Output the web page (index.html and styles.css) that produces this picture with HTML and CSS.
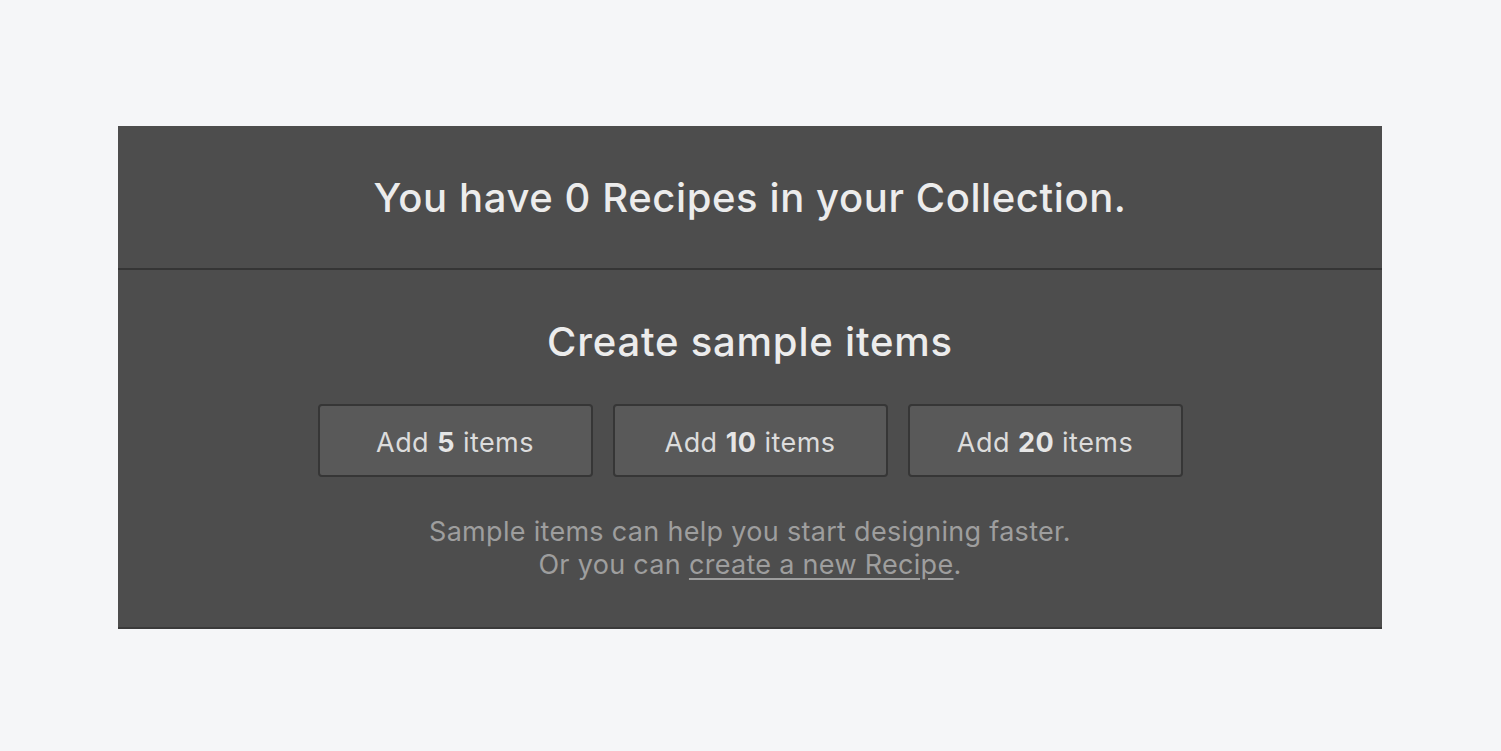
FILE: index.html
```html
<!DOCTYPE html>
<html lang="en">
<head>
<meta charset="utf-8">
<title>Collection</title>
<link rel="stylesheet" href="styles.css">
</head>
<body>
<div class="page">
  <section class="panel">
    <header class="panel-head">
      <h1 class="title">You have 0 Recipes in your Collection.</h1>
    </header>
    <div class="panel-body">
      <h2 class="subtitle">Create sample items</h2>
      <div class="buttons">
        <button class="btn">Add <b>5</b> items</button>
        <button class="btn">Add <b>10</b> items</button>
        <button class="btn">Add <b>20</b> items</button>
      </div>
      <p class="note">Sample items can help you start designing faster.<br>Or you can <a href="#" class="link">create a new Recipe</a>.</p>
    </div>
  </section>
</div>
</body>
</html>
```

FILE: styles.css
```css
html, body {
  margin: 0;
  padding: 0;
  background: #f5f6f8;
  font-family: Inter, "Noto Sans", sans-serif;
}
.page {
  padding: 126px 119px 0 118px;
}
.panel {
  background: #4d4d4d;
  border-bottom: 2px solid #3a3a3a;
  box-sizing: border-box;
}
.panel-head {
  height: 142px;
  display: flex;
  align-items: center;
  justify-content: center;
  border-bottom: 2px solid #353535;
}
.title {
  margin: 0;
  font-size: 40px;
  font-weight: 500;
  color: #ececec;
  letter-spacing: 0.6px;
}
.panel-body {
  display: flex;
  flex-direction: column;
  align-items: center;
  padding: 49px 0 46px;
}
.subtitle {
  margin: 0;
  font-size: 40px;
  font-weight: 500;
  color: #ececec;
  line-height: 46px;
  letter-spacing: 0.8px;
}
.buttons {
  display: flex;
  gap: 20px;
  margin-top: 39px;
}
.btn {
  width: 275px;
  height: 73px;
  background: #595959;
  border: 2px solid #363636;
  border-radius: 4px;
  color: #dcdcdc;
  font-family: inherit;
  font-size: 27px;
  font-weight: 400;
  letter-spacing: 0.45px;
  padding: 3px 0 0;
}
.btn b {
  font-weight: 700;
  color: #e6e6e6;
}
.note {
  margin: 38px 0 0;
  text-align: center;
  font-size: 27px;
  line-height: 33px;
  letter-spacing: 0.3px;
  color: #9e9e9e;
}
.link {
  color: #9e9e9e;
  text-decoration: underline;
  text-underline-offset: 4px;
}
```
